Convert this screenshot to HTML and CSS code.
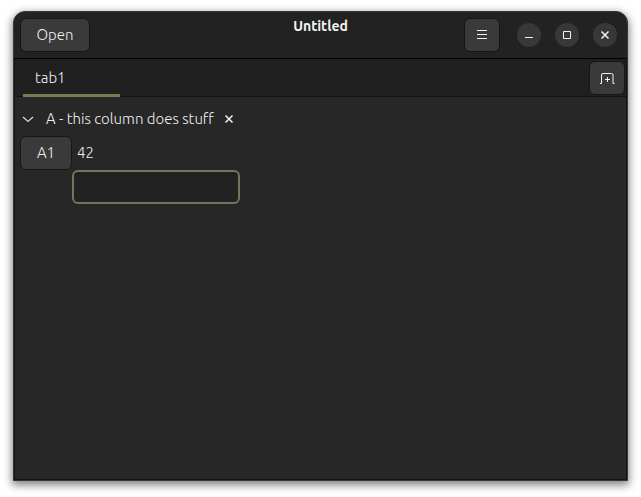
FILE: index.html
```html
<!DOCTYPE html>
<html lang="en">
<head>
<meta charset="utf-8">
<title>Untitled</title>
<link rel="stylesheet" href="styles.css">
</head>
<body>
<main class="window">
  <header class="titlebar">
    <div class="start"><button class="btn open">Open</button></div>
    <h1 class="title">Untitled</h1>
    <div class="end">
      <button class="btn icon-btn" aria-label="Menu">
        <svg width="16" height="16" viewBox="0 0 16 16"><path d="M3 3.5h10M3 7.5h10M3 11.5h10"/></svg>
      </button>
      <div class="controls">
        <button class="round" aria-label="Minimize"><svg width="16" height="16" viewBox="0 0 16 16"><path d="M4 10.5h8"/></svg></button>
        <button class="round" aria-label="Maximize"><svg width="16" height="16" viewBox="0 0 16 16"><path d="M4.5 4.5h7v7h-7z"/></svg></button>
        <button class="round" aria-label="Close"><svg width="16" height="16" viewBox="0 0 16 16"><path class="cross" d="M4.5 4.5l7 7M11.5 4.5l-7 7"/></svg></button>
      </div>
    </div>
  </header>
  <div class="body">
    <nav class="tabbar">
      <button class="tab">tab1</button>
      <button class="btn icon-btn" aria-label="New tab">
        <svg width="16" height="16" viewBox="0 0 16 16"><path d="M1 13.5h1.5V5q0-1.5 1.5-1.5h8.5q1.5 0 1.5 1.5v8.5H15.5M6 9.5h5M8.5 7v5"/></svg>
      </button>
    </nav>
    <section class="sheet">
      <div class="column-head">
        <button class="plain" aria-label="Collapse column"><svg width="16" height="16" viewBox="0 0 16 16"><path class="chevron" d="M3 6l5 4.5L13 6"/></svg></button>
        <h2 class="column-name">A - this column does stuff</h2>
        <button class="plain" aria-label="Remove column"><svg width="16" height="16" viewBox="0 0 16 16"><path class="cross" d="M4.5 4.5l7 7M11.5 4.5l-7 7"/></svg></button>
      </div>
      <div class="cells">
        <button class="btn">A1</button>
        <output class="value">42</output>
        <input class="entry" type="text" aria-label="A1 formula">
      </div>
    </section>
  </div>
</main>
</body>
</html>
```
FILE: styles.css
```css
* {
  box-sizing: border-box;
}

body {
  margin: 0;
  min-height: 100vh;
  padding: 11px 13px 16px;
  display: flex;
  background: #fff;
  color: #f0f0f0;
  font: 300 15px/20px Ubuntu, "Noto Sans", sans-serif;
}

button,
input {
  font: inherit;
  color: inherit;
  margin: 0;
  padding: 0;
}

svg {
  display: block;
  fill: none;
  stroke: #f2f2f2;
  stroke-width: 1;
}

.cross {
  stroke-width: 1.5;
}

.chevron {
  stroke: #d8d8d8;
  stroke-width: 1.25;
}

.window {
  flex: 1;
  display: flex;
  flex-direction: column;
  overflow: hidden;
  border: 1px solid #363636;
  border-radius: 12px 12px 0 0;
  background: #222;
  box-shadow: 0 3px 9px 1px rgba(0, 0, 0, 0.5);
}

.titlebar {
  display: grid;
  grid-template-columns: 1fr auto 1fr;
  height: 47px;
  padding: 6px;
  border-bottom: 1px solid #000;
}

.title {
  margin: -2px 0 0;
  font-size: 14px;
  line-height: 20px;
  font-weight: 700;
  color: #f4f4f4;
}

.end {
  display: flex;
  justify-content: flex-end;
  gap: 17px;
}

.controls {
  display: flex;
  align-items: center;
  gap: 14px;
  padding-right: 4px;
}

.btn {
  height: 34px;
  border: 1px solid #161616;
  border-radius: 6px;
  background: #3a3a3a;
}

.open {
  width: 70px;
}

.icon-btn,
.round {
  display: grid;
  place-items: center;
}

.icon-btn {
  width: 36px;
}

.round {
  width: 24px;
  height: 24px;
  border: 0;
  border-radius: 50%;
  background: #383838;
}

.body {
  flex: 1;
  border: 1px solid #151515;
  border-top: 0;
  background: #272727;
}

.tabbar {
  display: flex;
  justify-content: space-between;
  height: 38px;
  padding: 2px 1px 0 8px;
  border-bottom: 1px solid #131313;
  background: #202020;
}

.tab {
  width: 97px;
  height: 36px;
  padding: 0 12px;
  border: 0;
  border-bottom: 3px solid #7a7a57;
  background: none;
  text-align: left;
}

.sheet {
  padding: 10px 5px;
}

.column-head {
  display: flex;
  align-items: center;
  height: 24px;
  margin-bottom: 5px;
}

.column-name {
  margin: 0 7px 0 10px;
  font-size: 15px;
  line-height: 20px;
  font-weight: 300;
}

.plain {
  border: 0;
  background: none;
}

.cells {
  display: grid;
  grid-template-columns: 52px 168px;
  grid-auto-rows: 34px;
}

.value {
  padding: 0 5px;
  align-self: center;
}

.entry {
  grid-column: 2;
  width: 100%;
  padding: 0 8px;
  border: 2px solid #75755c;
  border-radius: 6px;
  background: #222;
  outline: none;
}
```
